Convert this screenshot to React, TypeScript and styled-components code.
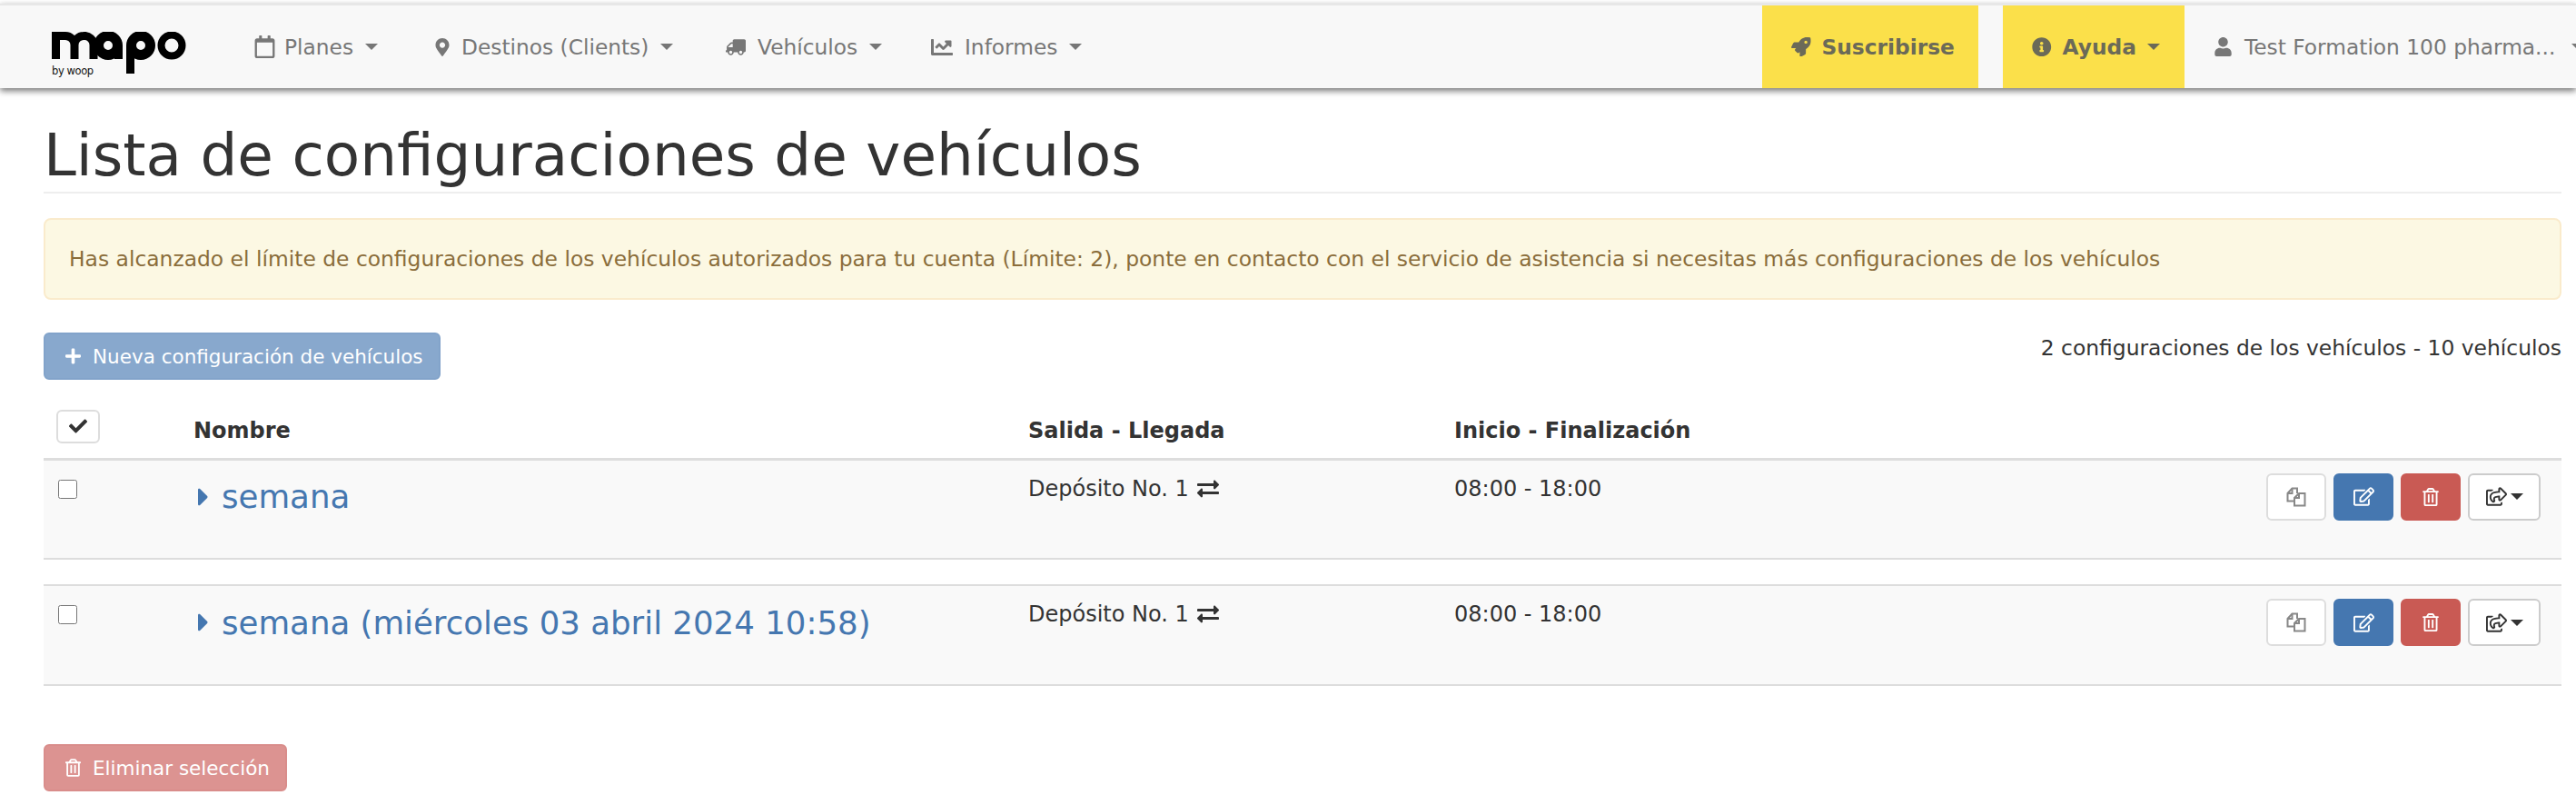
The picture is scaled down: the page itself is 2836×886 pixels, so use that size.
import React from 'react';
import styled, { createGlobalStyle } from 'styled-components';
import {
    FaRegCalendar,
    FaMapMarkerAlt,
    FaTruck,
    FaChartLine,
    FaRocket,
    FaInfoCircle,
    FaUser,
    FaCaretRight,
    FaCheck,
    FaPlus,
    FaRegTrashAlt,
    FaRegEdit,
    FaExchangeAlt,
    FaRegShareSquare,
} from 'react-icons/fa';

const GlobalStyle = createGlobalStyle`
    html, body {
        margin: 0;
        padding: 0;
        background: #fff;
        width: 2836px;
        height: 886px;
        overflow: hidden;
        font-family: "DejaVu Sans", Verdana, sans-serif;
        font-size: 24px;
        color: #333;
    }
    * {
        box-sizing: border-box;
    }
    svg {
        flex-shrink: 0;
    }
`;

const Navbar = styled.nav`
    display: flex;
    justify-content: space-between;
    height: 93px;
    margin-top: 4px;
    border-top: 2px solid #e7e7e7;
    background: #f8f8f8;
    box-shadow: 0 3px 7px rgba(0, 0, 0, 0.55);
    color: #777;
    font-size: 23.3px;
`;

const NavLeft = styled.div`
    display: flex;
    align-items: center;
    padding-left: 57px;
`;

const NavRight = styled.div`
    display: flex;
    width: 896px;
    flex-shrink: 0;
    overflow: hidden;
`;

const LogoBox = styled.div`
    position: relative;
    align-self: flex-start;
    width: 152px;
    height: 48px;
    margin: 29px 70px 0 0;
`;

const LogoTag = styled.span`
    position: absolute;
    left: 0;
    bottom: -1px;
    font-size: 11.5px;
    line-height: 12px;
    color: #111;
    letter-spacing: -0.4px;
`;

const NavItem = styled.div<{ $width?: number }>`
    display: flex;
    align-items: center;
    width: ${props => (props.$width ? `${props.$width}px` : 'auto')};
    flex-shrink: 0;
    white-space: nowrap;
`;

const IconSlot = styled.span<{ $width: number; $size: number; $flip?: boolean }>`
    display: flex;
    align-items: center;
    width: ${props => props.$width}px;
    font-size: ${props => props.$size}px;

    svg {
        transform: ${props => (props.$flip ? 'scaleX(-1)' : 'none')};
    }
`;

const NavHighlight = styled.div<{ $width: number }>`
    display: flex;
    align-items: center;
    flex-shrink: 0;
    gap: 12px;
    width: ${props => props.$width}px;
    height: 91px;
    padding-left: 32px;
    background: #fbe04a;
    color: #6b6a58;
    font-weight: 700;
    white-space: nowrap;

    svg {
        font-size: 21.5px;
    }
`;

const Spacer = styled.div`
    width: 27px;
    flex-shrink: 0;
`;

const UserItem = styled.div`
    display: flex;
    align-items: center;
    flex-shrink: 0;
    gap: 13px;
    padding-left: 32px;
    white-space: nowrap;

    svg {
        font-size: 21px;
    }
`;

const Caret = styled.span<{ $margin?: number }>`
    display: inline-block;
    width: 0;
    height: 0;
    margin-left: ${props => props.$margin ?? 0}px;
    border-top: 7px solid currentColor;
    border-left: 7px solid transparent;
    border-right: 7px solid transparent;
`;

const Container = styled.main`
    padding: 0 16px 0 48px;
`;

const Title = styled.h1`
    margin: 0;
    height: 116px;
    padding-top: 34px;
    border-bottom: 2px solid #eee;
    font-size: 64.4px;
    line-height: 80px;
    font-weight: 400;
    color: #333;
`;

const Alert = styled.div`
    display: flex;
    align-items: center;
    height: 90px;
    margin-top: 27px;
    padding-left: 26px;
    background: #fcf8e3;
    border: 2px solid #faebcc;
    border-radius: 8px;
    color: #8a6d3b;
    font-size: 23.4px;
`;

const ActionsRow = styled.div`
    display: flex;
    justify-content: space-between;
    align-items: flex-start;
    margin-top: 36px;
`;

const Count = styled.div`
    font-size: 23.4px;
    line-height: 34px;
`;

const WideButton = styled.button<{ $bg: string; $border: string }>`
    display: inline-flex;
    align-items: center;
    gap: 13px;
    height: 52px;
    padding: 0 17px 0 22px;
    border: 2px solid ${props => props.$border};
    border-radius: 6px;
    background: ${props => props.$bg};
    color: #fff;
    font-family: inherit;
    font-size: 21.5px;

    svg {
        width: 17px;
        height: 20px;
    }
`;

const Table = styled.table`
    width: 100%;
    margin-top: 30px;
    border-collapse: collapse;
    table-layout: fixed;
`;

const HeadCell = styled.th<{ $width?: number }>`
    width: ${props => (props.$width ? `${props.$width}px` : 'auto')};
    height: 57px;
    padding: 0 0 4px;
    border-bottom: 3px solid #ddd;
    font-weight: 700;
    text-align: left;
    vertical-align: middle;
`;

const CheckAll = styled.span`
    display: flex;
    align-items: center;
    justify-content: center;
    width: 48px;
    height: 37px;
    margin: 0 0 9px 14px;
    background: #fff;
    border: 2px solid #ddd;
    border-radius: 6px;
    font-size: 20px;
    color: #333;
`;

const Row = styled.tr`
    background: #f9f9f9;
`;

const Cell = styled.td`
    height: 110px;
    padding: 16px 0 0;
    border-bottom: 2px solid #ddd;
    vertical-align: top;
`;

const Gap = styled.td`
    height: 29px;
    padding: 0;
    border-bottom: 2px solid #ddd;
`;

const RowCheck = styled.input`
    display: block;
    width: 21px;
    height: 21px;
    margin: 5px 0 0 16px;
`;

const NameLink = styled.a`
    display: flex;
    align-items: center;
    gap: 14px;
    height: 48px;
    margin-left: 5px;
    color: #4577b0;
    font-size: 35.6px;
    white-space: nowrap;

    svg {
        width: 12px;
        height: 32px;
    }
`;

const CellText = styled.span`
    display: inline-flex;
    align-items: center;
    gap: 9px;
    line-height: 30px;
`;

const RowActions = styled.div`
    display: flex;
    justify-content: flex-end;
    gap: 8px;
    padding-right: 23px;
    margin-top: -2px;
`;

const IconButton = styled.button<{ $bg: string; $border: string; $color: string; $width?: number; $iconSize?: number }>`
    display: flex;
    align-items: center;
    justify-content: center;
    gap: 4px;
    width: ${props => props.$width ?? 66}px;
    height: 52px;
    padding: 0;
    background: ${props => props.$bg};
    border: 2px solid ${props => props.$border};
    border-radius: 6px;
    color: ${props => props.$color};
    font-size: ${props => props.$iconSize ?? 20}px;
`;

const FootActions = styled.div`
    margin-top: 64px;
`;

const Logo: React.FC = () => (
    <LogoBox>
        <svg width="152" height="48" viewBox="0 0 152 48">
            <path d="M4.5 30V4.5H15a10 10 0 0 1 10 10V30M25 14.500a10 10 0 0 1 10-10a10 10 0 0 1 11 10V30" fill="none" stroke="#000" strokeWidth="9" />
            <circle cx="62" cy="15" r="10.500" fill="none" stroke="#000" strokeWidth="11" />
            <rect x="69" y="15" width="9" height="15" fill="#000" />
            <circle cx="98" cy="15" r="10.500" fill="none" stroke="#000" strokeWidth="11" />
            <rect x="82" y="15" width="9" height="31" fill="#000" />
            <circle cx="132" cy="15" r="11.500" fill="none" stroke="#000" strokeWidth="8" />
        </svg>
        <LogoTag>by woop</LogoTag>
    </LogoBox>
);

const CopyIcon: React.FC = () => (
    <svg width="22" height="22" viewBox="0 0 22 22" fill="none" stroke="currentColor" strokeWidth="2">
        <path d="M8 15.500H1.500V7L6.500 1.500H12V7" />
        <path d="M6.500 1.500V7H1.500" />
        <path d="M9 20.500V12L14 7H20.500V20.500Z" />
        <path d="M14 7V12H9" />
    </svg>
);

const rows = ['semana', 'semana (miércoles 03 abril 2024 10:58)'];

const App: React.FC = () => {
    return (
        <>
            <GlobalStyle />
            <Navbar>
                <NavLeft>
                    <Logo />
                    <NavItem $width={198}>
                        <IconSlot $width={34} $size={25}><FaRegCalendar /></IconSlot>
                        Planes
                        <Caret $margin={13} />
                    </NavItem>
                    <NavItem $width={322}>
                        <IconSlot $width={31} $size={20}><FaMapMarkerAlt /></IconSlot>
                        Destinos (Clients)
                        <Caret $margin={13} />
                    </NavItem>
                    <NavItem $width={226}>
                        <IconSlot $width={35} $size={22} $flip><FaTruck /></IconSlot>
                        Vehículos
                        <Caret $margin={13} />
                    </NavItem>
                    <NavItem>
                        <IconSlot $width={37} $size={24}><FaChartLine /></IconSlot>
                        Informes
                        <Caret $margin={13} />
                    </NavItem>
                </NavLeft>
                <NavRight>
                    <NavHighlight $width={238}><FaRocket />Suscribirse</NavHighlight>
                    <Spacer />
                    <NavHighlight $width={200}><FaInfoCircle />Ayuda<Caret /></NavHighlight>
                    <UserItem><FaUser />Test Formation 100 pharma...<Caret $margin={5} /></UserItem>
                </NavRight>
            </Navbar>
            <Container>
                <Title>Lista de configuraciones de vehículos</Title>
                <Alert>
                    Has alcanzado el límite de configuraciones de los vehículos autorizados para tu cuenta (Límite: 2), ponte en contacto con el servicio de asistencia si necesitas más configuraciones de los vehículos
                </Alert>
                <ActionsRow>
                    <WideButton $bg="#88a8cd" $border="#82a3ca"><FaPlus />Nueva configuración de vehículos</WideButton>
                    <Count>2 configuraciones de los vehículos - 10 vehículos</Count>
                </ActionsRow>
                <Table>
                    <thead>
                        <tr>
                            <HeadCell $width={165}><CheckAll><FaCheck /></CheckAll></HeadCell>
                            <HeadCell $width={919}>Nombre</HeadCell>
                            <HeadCell $width={469}>Salida - Llegada</HeadCell>
                            <HeadCell>Inicio - Finalización</HeadCell>
                            <HeadCell $width={440} />
                        </tr>
                    </thead>
                    <tbody>
                        {rows.map((name, i) => (
                            <React.Fragment key={name}>
                                {i > 0 && <tr><Gap colSpan={5} /></tr>}
                                <Row>
                                    <Cell><RowCheck type="checkbox" /></Cell>
                                    <Cell><NameLink><FaCaretRight />{name}</NameLink></Cell>
                                    <Cell><CellText>Depósito No. 1<FaExchangeAlt /></CellText></Cell>
                                    <Cell><CellText>08:00 - 18:00</CellText></Cell>
                                    <Cell>
                                        <RowActions>
                                            <IconButton $bg="#fff" $border="#ddd" $color="#888"><CopyIcon /></IconButton>
                                            <IconButton $bg="#4577b0" $border="#4577b0" $color="#fff" $iconSize={23}><FaRegEdit /></IconButton>
                                            <IconButton $bg="#c95a54" $border="#c95a54" $color="#fff"><FaRegTrashAlt /></IconButton>
                                            <IconButton $bg="#fff" $border="#ccc" $color="#333" $width={80} $iconSize={23}><FaRegShareSquare /><Caret /></IconButton>
                                        </RowActions>
                                    </Cell>
                                </Row>
                            </React.Fragment>
                        ))}
                    </tbody>
                </Table>
                <FootActions>
                    <WideButton $bg="#dc9391" $border="#d98d8b"><FaRegTrashAlt />Eliminar selección</WideButton>
                </FootActions>
            </Container>
        </>
    );
};

export default App;
